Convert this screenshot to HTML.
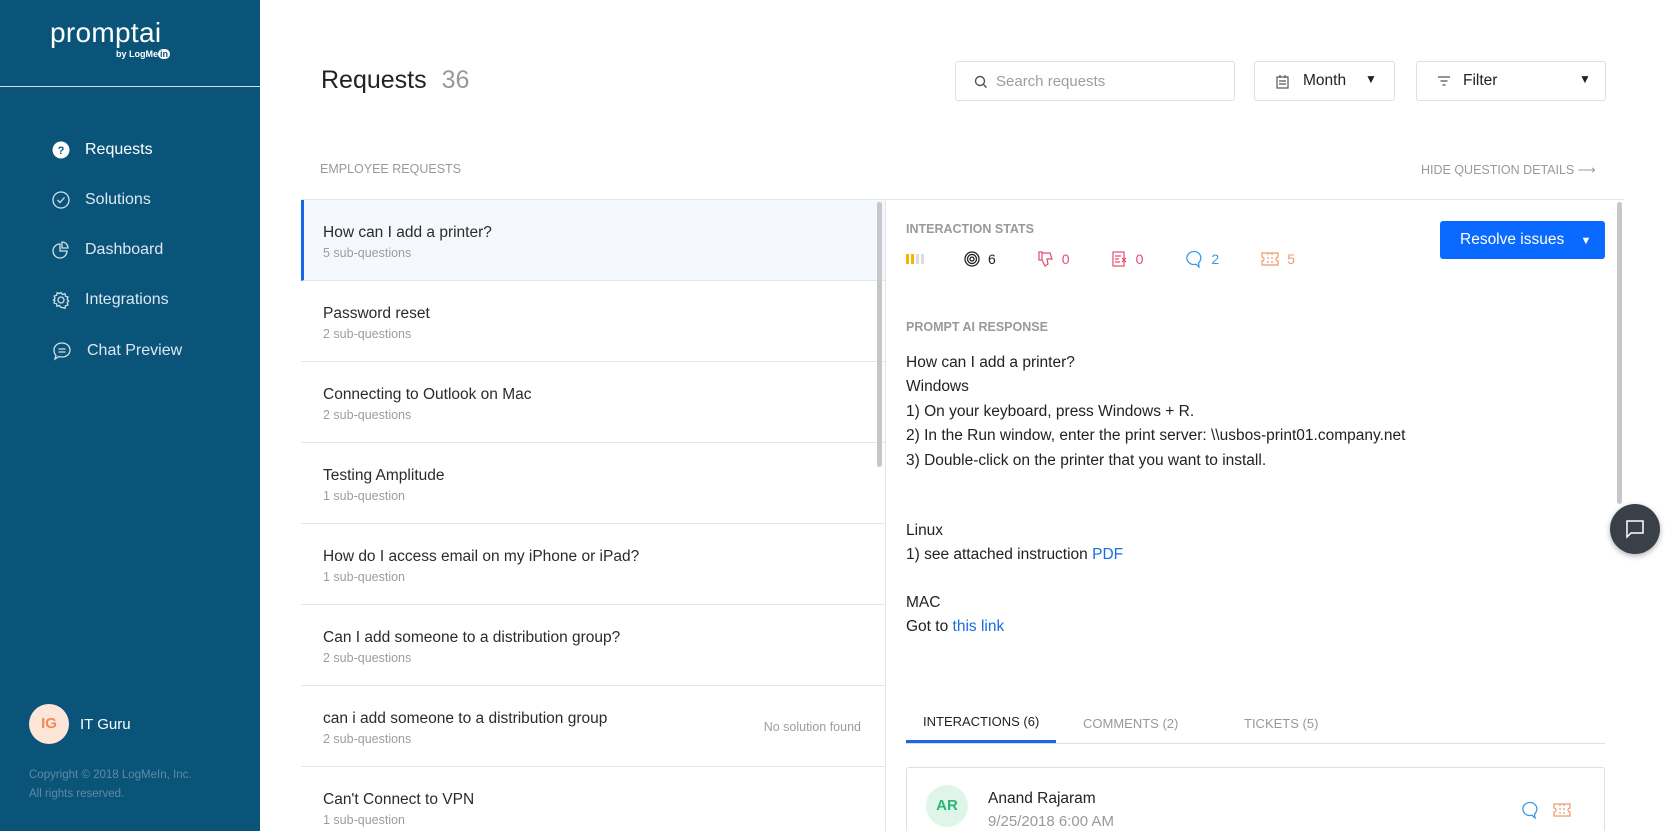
<!DOCTYPE html>
<html><head><meta charset="utf-8"><style>
*{box-sizing:border-box;margin:0;padding:0}
html,body{width:1665px;height:831px;overflow:hidden}
body{font-family:"Liberation Sans",sans-serif;background:#fff;color:#222}
#wrap{position:relative;width:1665px;height:831px;overflow:hidden}
.abs{position:absolute}
.side{left:0;top:0;width:260px;height:831px;background:#0b5479}
.nav{left:52px;color:#dbe8f0;font-size:16px;display:flex;align-items:center}
.nav svg{margin-right:15px}
.row{position:absolute;left:301px;width:584px;height:81px;border-bottom:1px solid #e3e6ea}
.row .t{position:absolute;left:22px;top:24px;font-size:15.5px;color:#2b2b2b}
.row .s{position:absolute;left:22px;top:46px;font-size:12.5px;color:#9a9ea3}
.resp{left:906px;font-size:15.5px;color:#222}
.box{border:1px solid #dcdfe3;border-radius:3px;background:#fff}
</style></head><body><div id="wrap">
<div class="abs side">
 <div class="abs" style="left:50px;top:17px;color:#fff;font-size:28px;letter-spacing:0.3px">promptai</div>
 <div class="abs" style="left:116px;top:49px;color:#fff;font-size:9px;font-weight:bold">by LogMe<span style="background:#fff;color:#0b5479;border-radius:6px;padding:0 2px">in</span></div>
 <div class="abs" style="left:0;top:86px;width:260px;height:1px;background:#cfe0ea"></div>
 <div class="abs nav" style="top:141px;color:#fff"><svg width="18" height="18"><circle cx="9" cy="9" r="8.5" fill="#fff"/><text x="9" y="13" font-size="11" text-anchor="middle" fill="#0b5479" font-weight="bold">?</text></svg>Requests</div>
 <div class="abs nav" style="top:191px"><svg width="18" height="18" fill="none" stroke="#cfe0ea" stroke-width="1.3"><circle cx="9" cy="9" r="8"/><path d="M5.5 9l2.5 2.5 4.5-5"/></svg>Solutions</div>
 <div class="abs nav" style="top:241px"><svg width="18" height="18" fill="none" stroke="#cfe0ea" stroke-width="1.3"><path d="M8 3a7 7 0 1 0 7 7H8z"/><path d="M10 1v6h6a6 6 0 0 0-6-6z"/></svg>Dashboard</div>
 <div class="abs nav" style="top:291px"><svg width="18" height="18" fill="none" stroke="#cfe0ea" stroke-width="1.3"><circle cx="9" cy="9" r="3"/><path d="M9 1.5l1.5 2 2.5-.8.5 2.5 2.5.8-.8 2.5 1.5 1.5-1.5 1.5.8 2.5-2.5.8-.5 2.5-2.5-.8L9 16.5l-1.5-2-2.5.8-.5-2.5-2.5-.8.8-2.5L1.5 9l1.5-1.5-.8-2.5 2.5-.8.5-2.5 2.5.8z"/></svg>Integrations</div>
 <div class="abs nav" style="top:341px"><svg width="20" height="20" fill="none" stroke="#cfe0ea" stroke-width="1.3"><path d="M10 2c4.5 0 8 3 8 7s-3.5 7-8 7c-1 0-2-.2-3-.5L3 18l1-3.5C2.8 13.2 2 11.2 2 9c0-4 3.5-7 8-7z"/><path d="M6.5 8h7M6.5 11h7"/></svg>Chat Preview</div>
 <div class="abs" style="left:29px;top:704px;width:40px;height:40px;border-radius:50%;background:#fde6d8;color:#ef8a5a;font-size:15px;font-weight:bold;text-align:center;line-height:40px">IG</div>
 <div class="abs" style="left:80px;top:716px;color:#fff;font-size:15px">IT Guru</div>
 <div class="abs" style="left:29px;top:766px;color:#5e8aa6;font-size:11.5px;line-height:19px">Copyright © 2018 LogMeIn, Inc.<br>All rights reserved.</div>
</div>

<div class="abs" style="left:321px;top:66px;font-size:25px;color:#222">Requests <span style="color:#999;margin-left:8px">36</span></div>
<div class="abs box" style="left:955px;top:61px;width:280px;height:40px"><svg class="abs" style="left:18px;top:13px" width="14" height="14" fill="none" stroke="#555" stroke-width="1.4"><circle cx="6" cy="6" r="4.5"/><path d="M9.5 9.5l3 3"/></svg><span class="abs" style="left:40px;top:11px;font-size:15px;color:#9a9ea3">Search requests</span></div>
<div class="abs box" style="left:1254px;top:61px;width:141px;height:40px"><svg class="abs" style="left:21px;top:13px" width="13" height="14" fill="none" stroke="#555" stroke-width="1.2"><rect x="1" y="2" width="11" height="11"/><path d="M4 0v3M9 0v3M3 6h7M3 9h7"/></svg><span class="abs" style="left:48px;top:10px;font-size:15.5px">Month</span><span class="abs" style="left:110px;top:10px;font-size:12px">▼</span></div>
<div class="abs box" style="left:1416px;top:61px;width:190px;height:40px"><svg class="abs" style="left:20px;top:13px" width="14" height="12" stroke="#555" stroke-width="1.3"><path d="M1 2h12M3.5 6h7M5.5 10h3"/></svg><span class="abs" style="left:46px;top:10px;font-size:15.5px">Filter</span><span class="abs" style="left:162px;top:10px;font-size:12px">▼</span></div>

<div class="abs" style="left:320px;top:162px;font-size:12.5px;color:#999">EMPLOYEE REQUESTS</div>
<div class="abs" style="left:1421px;top:162px;font-size:12.5px;color:#999">HIDE QUESTION DETAILS ⟶</div>

<div class="abs" style="left:301px;top:199px;width:1323px;height:1px;background:#e3e6ea"></div>
<div class="row" style="top:200px;background:#f5f8fc;border-left:3px solid #1867e6"><div class="t" style="left:19px">How can I add a printer?</div><div class="s" style="left:19px">5 sub-questions</div></div>
<div class="row" style="top:281px"><div class="t">Password reset</div><div class="s">2 sub-questions</div></div>
<div class="row" style="top:362px"><div class="t">Connecting to Outlook on Mac</div><div class="s">2 sub-questions</div></div>
<div class="row" style="top:443px"><div class="t">Testing Amplitude</div><div class="s">1 sub-question</div></div>
<div class="row" style="top:524px"><div class="t">How do I access email on my iPhone or iPad?</div><div class="s">1 sub-question</div></div>
<div class="row" style="top:605px"><div class="t">Can I add someone to a distribution group?</div><div class="s">2 sub-questions</div></div>
<div class="row" style="top:686px"><div class="t">can i add someone to a distribution group</div><div class="s">2 sub-questions</div><div class="abs" style="right:24px;top:34px;font-size:12.5px;color:#9a9ea3">No solution found</div></div>
<div class="row" style="top:767px"><div class="t">Can't Connect to VPN</div><div class="s">1 sub-question</div></div>
<div class="abs" style="left:877px;top:202px;width:5px;height:265px;background:#c5c7ca;border-radius:3px"></div>
<div class="abs" style="left:885px;top:200px;width:1px;height:631px;background:#e3e6ea"></div>

<div class="abs" style="left:906px;top:222px;font-size:12.5px;color:#999;font-weight:bold">INTERACTION STATS</div>
<div class="abs" style="left:906px;top:250px;display:flex;align-items:center;font-size:14px">
 <span style="display:inline-block;width:3px;height:10px;background:#f5b400;margin-right:2px"></span><span style="display:inline-block;width:3px;height:10px;background:#f5b400;margin-right:2px"></span><span style="display:inline-block;width:3px;height:10px;background:#ddd;margin-right:2px"></span><span style="display:inline-block;width:3px;height:10px;background:#ddd;margin-right:40px"></span>
 <svg width="16" height="16" fill="none" stroke="#222" stroke-width="1.3"><circle cx="8" cy="8" r="7"/><circle cx="8" cy="8" r="4.5"/><circle cx="8" cy="8" r="2"/></svg><span style="margin:0 42px 0 8px">6</span>
 <svg width="16" height="16" fill="none" stroke="#e74a6e" stroke-width="1.2"><path d="M1 1h3v8H1zM4 2h8l2 6h-5l1 5-3 2-3-6"/></svg><span style="margin:0 42px 0 8px;color:#e74a6e">0</span>
 <svg width="16" height="16" fill="none" stroke="#e74a6e" stroke-width="1.2"><rect x="1" y="1" width="11" height="14"/><path d="M3 5h6M3 8h4M3 11h5M10 7l4 4M14 7l-4 4"/></svg><span style="margin:0 42px 0 8px;color:#e74a6e">0</span>
 <svg width="18" height="18" fill="none" stroke="#3a9be0" stroke-width="1.3"><path d="M9 1.5a7 6.5 0 1 0 2 12.7l3 2.8-.5-4A6.5 6.5 0 0 0 9 1.5z"/></svg><span style="margin:0 42px 0 8px;color:#3a9be0">2</span>
 <svg width="18" height="16" fill="none" stroke="#ef9a6a" stroke-width="1.2"><path d="M1 2h16v4a2 2 0 0 0 0 4v4H1v-4a2 2 0 0 0 0-4z"/><path d="M7 2v12M11 2v12" stroke-dasharray="2 2"/></svg><span style="margin-left:8px;color:#ef9a6a">5</span>
</div>
<div class="abs" style="left:1440px;top:221px;width:165px;height:38px;background:#0a6aff;border-radius:3px;color:#fff;font-size:15.5px;line-height:38px;padding-left:20px">Resolve issues <span style="font-size:11px;margin-left:12px">▼</span></div>
<div class="abs" style="left:1617px;top:202px;width:5px;height:302px;background:#c5c7ca;border-radius:3px"></div>
<div class="abs" style="left:1610px;top:504px;width:50px;height:50px;border-radius:50%;background:#3a4049;box-shadow:0 2px 6px rgba(0,0,0,.3)"><svg class="abs" style="left:15px;top:15px" width="20" height="20" fill="none" stroke="#fff" stroke-width="1.5"><path d="M2 2h16v12H6l-4 4z"/></svg></div>

<div class="abs" style="left:906px;top:320px;font-size:12.5px;color:#999;font-weight:bold">PROMPT AI RESPONSE</div>
<div class="abs resp" style="top:351px;line-height:24.4px">How can I add a printer?<br>Windows<br>1) On your keyboard, press Windows + R.<br>2) In the Run window, enter the print server: \\usbos-print01.company.net<br>3) Double-click on the printer that you want to install.</div>
<div class="abs resp" style="top:519px;line-height:24.4px">Linux<br>1) see attached instruction <span style="color:#1a6ce0">PDF</span></div>
<div class="abs resp" style="top:591px;line-height:24.4px">MAC<br>Got to <span style="color:#1a6ce0">this link</span></div>

<div class="abs" style="left:923px;top:714px;font-size:13px;color:#222">INTERACTIONS (6)</div>
<div class="abs" style="left:1083px;top:716px;font-size:13px;color:#999">COMMENTS (2)</div>
<div class="abs" style="left:1244px;top:716px;font-size:13px;color:#999">TICKETS (5)</div>
<div class="abs" style="left:906px;top:743px;width:699px;height:1px;background:#dcdfe3"></div>
<div class="abs" style="left:906px;top:740px;width:150px;height:3px;background:#1867e6"></div>
<div class="abs box" style="left:906px;top:767px;width:699px;height:80px"></div>
<div class="abs" style="left:926px;top:785px;width:42px;height:42px;border-radius:50%;background:#dff5ea;color:#2bb673;font-weight:bold;font-size:15px;line-height:42px;text-align:center">AR</div>
<div class="abs" style="left:988px;top:790px;font-size:15.5px">Anand Rajaram</div>
<div class="abs" style="left:988px;top:813px;font-size:15px;color:#999">9/25/2018 6:00 AM</div>
<svg class="abs" style="left:1521px;top:801px" width="18" height="18" fill="none" stroke="#3a9be0" stroke-width="1.3"><path d="M9 1.5a7 6.5 0 1 0 2 12.7l3 2.8-.5-4A6.5 6.5 0 0 0 9 1.5z"/></svg>
<svg class="abs" style="left:1553px;top:802px" width="18" height="16" fill="none" stroke="#ef9a6a" stroke-width="1.2"><path d="M1 2h16v4a2 2 0 0 0 0 4v4H1v-4a2 2 0 0 0 0-4z"/><path d="M7 2v12M11 2v12" stroke-dasharray="2 2"/></svg>
</div></body></html>
